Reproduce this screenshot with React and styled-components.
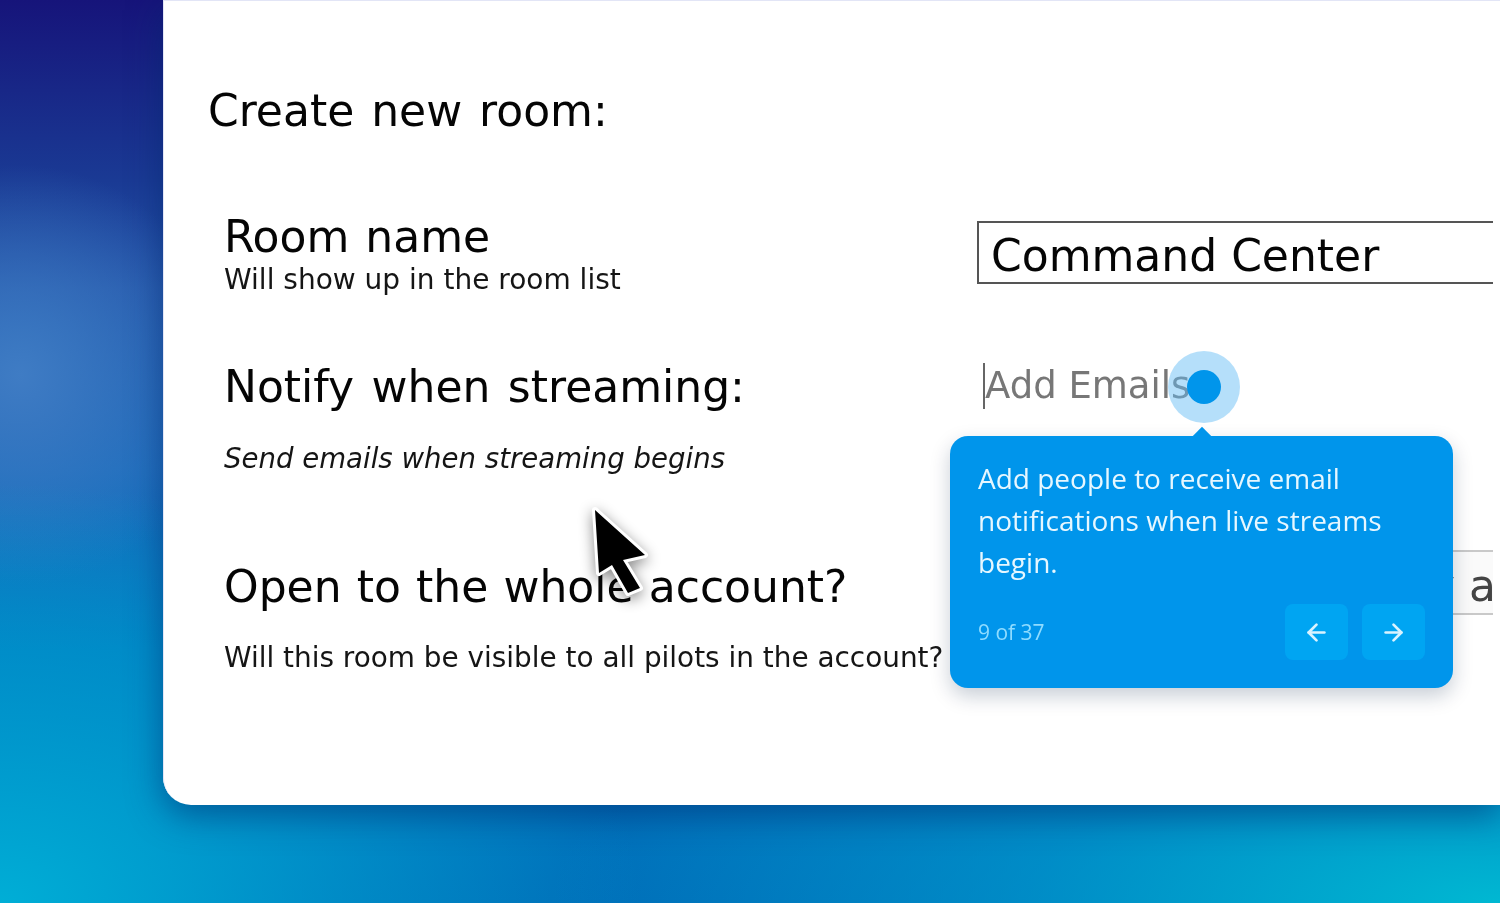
import React from 'react';
import styled, { createGlobalStyle } from 'styled-components';
import { ArrowLeft, ArrowRight } from 'lucide-react';

const GlobalStyle = createGlobalStyle`
  html, body {
    margin: 0;
    padding: 0;
    width: 1500px;
    height: 903px;
    overflow: hidden;
  }
`;

const Stage = styled.div`
  width: 1500px;
  height: 903px;
  padding: 0 0 98px 163px;
  box-sizing: border-box;
  overflow: hidden;
  background-color: #0070b8;
  background-image:
    radial-gradient(ellipse 950px 300px at 1500px 903px, #00b8d2 0%, rgba(0, 165, 210, 0.55) 50%, rgba(0, 165, 210, 0) 100%),
    radial-gradient(ellipse 640px 420px at 0px 903px, #00aed6 0%, rgba(0, 174, 214, 0) 100%),
    radial-gradient(ellipse 210px 210px at 20px 375px, #3f7cc4 0%, rgba(63, 124, 196, 0) 100%),
    linear-gradient(180deg, #16147a 0%, #1a3a94 20%, #2456aa 32%, #1a6cbc 52%, #0078c0 72%, #006cb8 100%);
`;

const Card = styled.main`
  position: relative;
  height: 805px;
  padding: 86px 7px 0 45px;
  box-sizing: border-box;
  background: #fff;
  border-bottom-left-radius: 28px;
  box-shadow: 0 10px 34px rgba(0, 40, 110, 0.55), inset 1px 1px 0 #e2e5f6;
  font-family: "DejaVu Sans", Verdana, sans-serif;
  color: #050505;
  filter: blur(0.45px);
`;

const Heading = styled.h1`
  margin: 0;
  font-size: 44px;
  font-weight: 400;
  line-height: 50px;
  word-spacing: 3px;
`;

const Rows = styled.div`
  display: grid;
  grid-template-columns: 753px minmax(0, 1fr);
  margin: 0 0 0 16px;
`;

const Label = styled.div`
  padding-top: ${p => p.$top}px;
  height: ${p => p.$height}px;
  box-sizing: border-box;
`;

const Name = styled.div`
  font-size: 44px;
  line-height: 50px;
  word-spacing: ${p => p.$spread}px;
  white-space: nowrap;
`;

const Hint = styled.div`
  margin-top: ${p => p.$gap}px;
  font-size: ${p => p.$size}px;
  line-height: 34px;
  font-style: ${p => (p.$italic ? 'italic' : 'normal')};
  color: #151515;
  white-space: nowrap;
`;

const Field = styled.div`
  padding-top: ${p => p.$top}px;
  position: relative;
`;

const NameInput = styled.div`
  height: 63px;
  box-sizing: border-box;
  padding-left: 12px;
  border: 2px solid #555;
  border-right: 0;
  font-size: 44px;
  line-height: 66px;
  white-space: nowrap;
  overflow: hidden;
`;

const EmailInput = styled.div`
  height: 48px;
  padding-left: 6px;
  font-size: 37px;
  line-height: 48px;
  color: #777;
  display: flex;
  align-items: center;
`;

const Caret = styled.span`
  width: 2px;
  height: 46px;
  background: #666;
`;

const AccountSelect = styled.div`
  height: 65px;
  margin-top: -12px;
  padding-left: 452px;
  box-sizing: border-box;
  border-top: 2px solid #c9c9c9;
  border-bottom: 2px solid #c9c9c9;
  background: #fafafa;
  font-size: 44px;
  line-height: 68px;
  color: #444;
  overflow: hidden;
  white-space: nowrap;
`;

const Beacon = styled.span`
  position: absolute;
  left: 191px;
  top: -11px;
  width: 72px;
  height: 72px;
  border-radius: 50%;
  background: rgba(100, 188, 245, 0.48);
  display: flex;
  align-items: center;
  justify-content: center;

  &::after {
    content: '';
    width: 34px;
    height: 34px;
    border-radius: 50%;
    background: #0095eb;
  }
`;

const Tooltip = styled.aside`
  position: absolute;
  left: 787px;
  top: 436px;
  width: 503px;
  height: 252px;
  box-sizing: border-box;
  padding: 21px 28px 0;
  border-radius: 18px;
  background: #0095eb;
  box-shadow: 0 8px 20px rgba(0, 30, 70, 0.22);
  font-family: "Open Sans", sans-serif;
  color: #e6f7ff;

  &::before {
    content: '';
    position: absolute;
    left: 243px;
    top: -9px;
    width: 18px;
    height: 18px;
    background: #0095eb;
    transform: rotate(45deg) scale(0.72);
  }
`;

const TooltipText = styled.p`
  margin: 0;
  font-size: 28px;
  line-height: 42px;
`;

const TooltipFooter = styled.div`
  display: flex;
  align-items: center;
  justify-content: space-between;
  margin-top: 21px;
`;

const Progress = styled.span`
  font-size: 21px;
  color: #8fdcff;
`;

const Nav = styled.div`
  display: flex;
  gap: 14px;
`;

const NavButton = styled.button`
  width: 63px;
  height: 56px;
  padding: 0;
  border: 0;
  border-radius: 8px;
  background: #00a5f2;
  color: #d9f3ff;
  display: flex;
  align-items: center;
  justify-content: center;
`;

const Cursor = styled.svg`
  position: absolute;
  left: 415px;
  top: 490px;
  width: 90px;
  height: 120px;
  filter: drop-shadow(0 4px 7px rgba(0, 0, 0, 0.45));
`;

export default function App() {
  return (
    <>
      <GlobalStyle />
      <Stage>
        <Card>
          <Heading>Create new room:</Heading>
          <Rows>
            <Label $top={76} $height={226}>
              <Name $spread={2}>Room name</Name>
              <Hint $gap={1} $size={28}>Will show up in the room list</Hint>
            </Label>
            <Field $top={85}>
              <NameInput>Command Center</NameInput>
            </Field>
            <Label $top={0} $height={200}>
              <Name $spread={3.5}>Notify when streaming:</Name>
              <Hint $italic $gap={30} $size={27.6}>Send emails when streaming begins</Hint>
            </Label>
            <Field $top={0}>
              <EmailInput>
                <Caret />
                Add Emails
              </EmailInput>
              <Beacon />
            </Field>
            <Label $top={0} $height={150}>
              <Name $spread={1.2}>Open to the whole account?</Name>
              <Hint $gap={29} $size={27.9}>Will this room be visible to all pilots in the account?</Hint>
            </Label>
            <Field $top={0}>
              <AccountSelect>y a</AccountSelect>
            </Field>
          </Rows>

          <Tooltip>
            <TooltipText>
              Add people to receive email
              <br />
              notifications when live streams
              <br />
              begin.
            </TooltipText>
            <TooltipFooter>
              <Progress>9 of 37</Progress>
              <Nav>
                <NavButton aria-label="Previous"><ArrowLeft size={27} strokeWidth={2.4} /></NavButton>
                <NavButton aria-label="Next"><ArrowRight size={27} strokeWidth={2.4} /></NavButton>
              </Nav>
            </TooltipFooter>
          </Tooltip>

          <Cursor viewBox="0 0 90 120">
            <path
              d="M17 20 L67 65 L45 70 L62 98 L50 103 L34 75 L21 83 Z"
              fill="#000"
              stroke="#fff"
              strokeWidth="6"
              strokeLinejoin="round"
              paintOrder="stroke"
            />
          </Cursor>
        </Card>
      </Stage>
    </>
  );
}
